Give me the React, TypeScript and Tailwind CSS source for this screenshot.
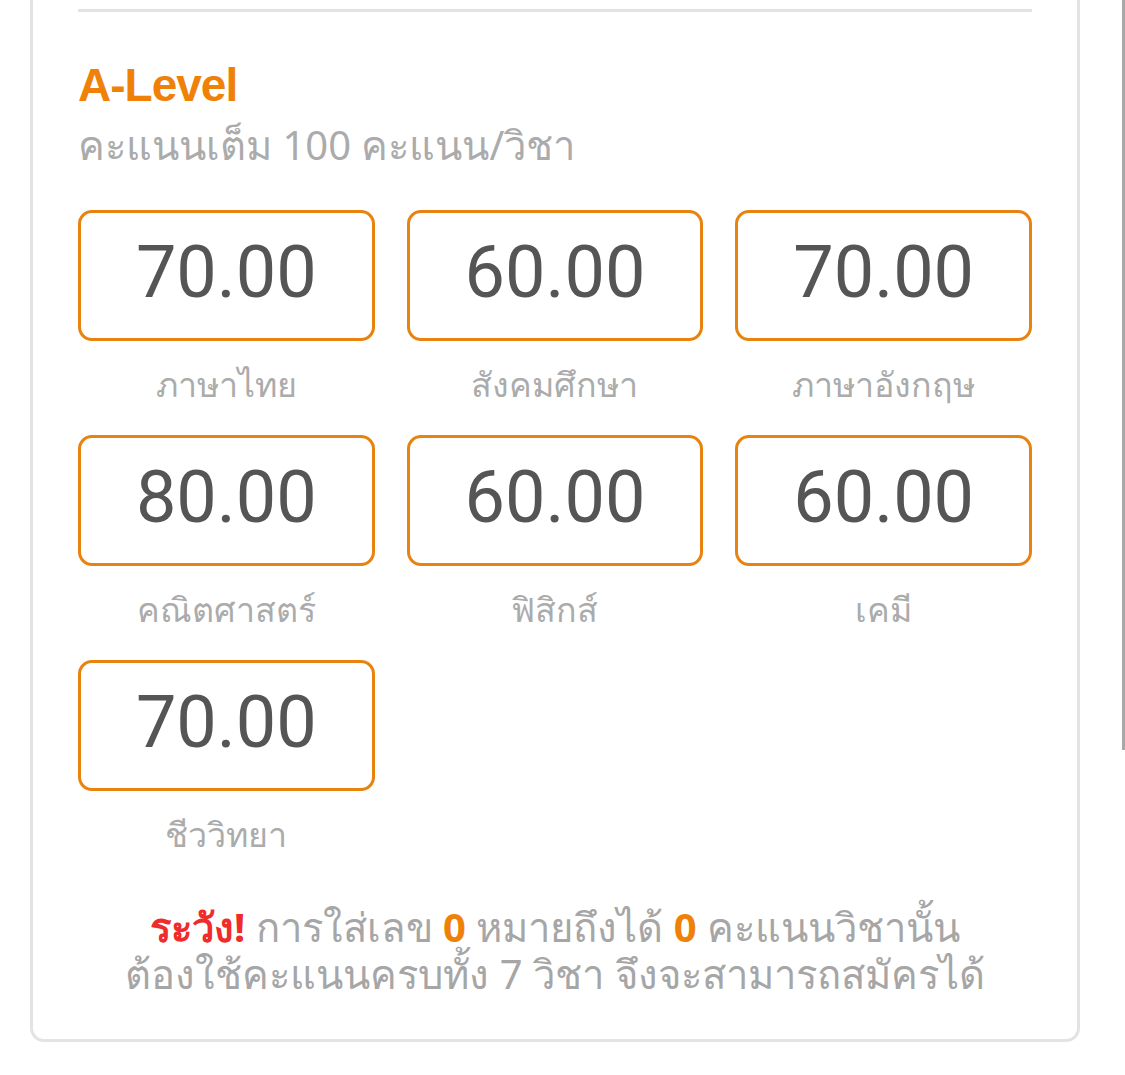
import * as React from "react";

const scores = [
  { value: "70.00", label: "ภาษาไทย" },
  { value: "60.00", label: "สังคมศึกษา" },
  { value: "70.00", label: "ภาษาอังกฤษ" },
  { value: "80.00", label: "คณิตศาสตร์" },
  { value: "60.00", label: "ฟิสิกส์" },
  { value: "60.00", label: "เคมี" },
  { value: "70.00", label: "ชีววิทยา" },
];

function ScoreBox({ value, label }: { value: string; label: string }) {
  return (
    <div className="flex flex-col items-center">
      <div className="flex h-[131px] w-full items-start justify-center rounded-[14px] border-[3px] border-[#e8830f] pt-[24px]">
        <span className="font-['Roboto',sans-serif] text-[72px] leading-[72px] text-[#555555]">{value}</span>
      </div>
      <div className="mt-[22px] h-[72px] font-['Noto_Sans','Liberation_Sans',sans-serif] text-[34px] leading-[42px] text-[#ababab]">
        {label}
      </div>
    </div>
  );
}

export default function App() {
  return (
    <div className="relative h-[1075px] w-[1125px] overflow-hidden bg-white">
      <div className="absolute right-0 top-0 h-[750px] w-[3px] bg-[#a8a8a8]" />
      <div className="ml-[30px] mt-[-20px] w-[1050px] rounded-b-[14px] border-[3px] border-[#e3e3e3] px-[45px] pb-[42px]">
        <div className="mt-[26px] h-[3px] bg-[#e3e3e3]" />
        <h2 className="mt-[50px] font-['Liberation_Sans',sans-serif] text-[46px] font-bold leading-[46px] tracking-[-1px] text-[#f08108]">
          A-Level
        </h2>
        <p className="mt-[12px] font-['Noto_Sans','Liberation_Sans',sans-serif] text-[40px] leading-[50px] text-[#ababab]">
          คะแนนเต็ม 100 คะแนน/วิชา
        </p>
        <div className="mt-[40px] grid grid-cols-3 gap-x-[32px]">
          {scores.map((s, i) => (
            <ScoreBox key={i} value={s.value} label={s.label} />
          ))}
        </div>
        <div className="mt-[18px] text-center font-['Noto_Sans','Liberation_Sans',sans-serif] text-[40px] leading-[47px] text-[#a6a6a6]">
          <p>
            <span className="font-bold text-[#ef2b2b]">ระวัง!</span> การใส่เลข{" "}
            <span className="font-bold text-[#f08108]">0</span> หมายถึงได้{" "}
            <span className="font-bold text-[#f08108]">0</span> คะแนนวิชานั้น
          </p>
          <p>ต้องใช้คะแนนครบทั้ง 7 วิชา จึงจะสามารถสมัครได้</p>
        </div>
      </div>
    </div>
  );
}
